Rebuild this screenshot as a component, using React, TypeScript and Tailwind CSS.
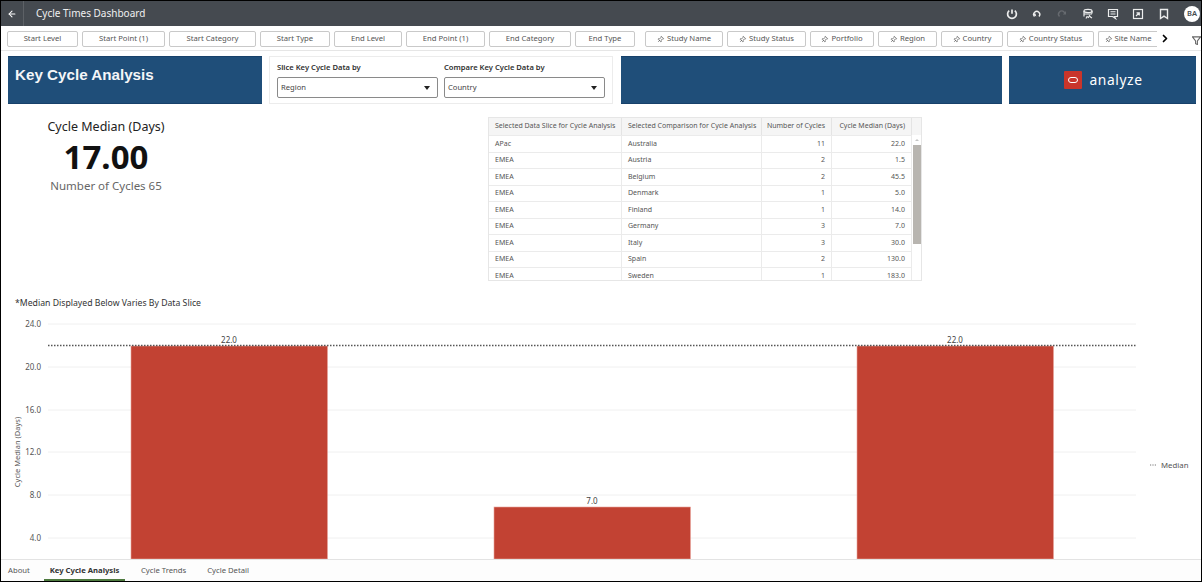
import React from "react";
import { ArrowLeft, ChevronRight, Pin } from "lucide-react";

const plain: [string, string][] = [
  ["Start Level", "w-[71px]"],
  ["Start Point (1)", "w-[83px]"],
  ["Start Category", "w-[87px]"],
  ["Start Type", "w-[70px]"],
  ["End Level", "w-[68px]"],
  ["End Point (1)", "w-[79px]"],
  ["End Category", "w-[82px]"],
  ["End Type", "w-[60px]"],
];
const pinned: [string, string][] = [
  ["Study Name", "w-[78px]"],
  ["Study Status", "w-[79px]"],
  ["Portfolio", "w-[64px]"],
  ["Region", "w-[59px]"],
  ["Country", "w-[62px]"],
  ["Country Status", "w-[87px]"],
];
const rows = [
  ["APac", "Australia", "11", "22.0"],
  ["EMEA", "Austria", "2", "1.5"],
  ["EMEA", "Belgium", "2", "45.5"],
  ["EMEA", "Denmark", "1", "5.0"],
  ["EMEA", "Finland", "1", "14.0"],
  ["EMEA", "Germany", "3", "7.0"],
  ["EMEA", "Italy", "3", "30.0"],
  ["EMEA", "Spain", "2", "130.0"],
  ["EMEA", "Sweden", "1", "183.0"],
];
const grid = [
  [324, "24.0"],
  [367, "20.0"],
  [410, "16.0"],
  [452, "12.0"],
  [495, "8.0"],
  [538, "4.0"],
] as const;
const bars = [
  [131, 346, "22.0"],
  [494, 507, "7.0"],
  [857, 346, "22.0"],
] as const;

function Ico({ className, children }: { className?: string; children: React.ReactNode }) {
  return (
    <svg viewBox="0 0 12 12" fill="none" stroke="currentColor" strokeWidth="1.4" className={`h-[12px] w-[12px] ${className ?? ""}`}>
      {children}
    </svg>
  );
}

function Select({ label, value }: { label: string; value: string }) {
  return (
    <div className="w-[161px]">
      <div className="h-[17px] text-[7.6px] leading-[15px] font-semibold text-[#2f2f2f]">{label}</div>
      <div className="flex h-[21px] items-center justify-between rounded-[2px] border border-[#8a8a8a] bg-white pl-[3px] pr-[7px] text-[7.6px] text-[#444]">
        <span>{value}</span>
        <span className="h-0 w-0 border-x-[3px] border-t-[4px] border-x-transparent border-t-[#222]" />
      </div>
    </div>
  );
}

export default function App() {
  return (
    <div className="flex h-[582px] w-[1202px] flex-col overflow-hidden border-x border-t border-b border-black bg-white font-['Noto_Sans','Open_Sans',sans-serif]">
      <header className="flex h-[25px] shrink-0 items-center bg-[#454a50] text-white">
        <div className="flex h-full w-[23px] items-center justify-center border-r border-[#5d6166]">
          <ArrowLeft size={10} strokeWidth={2.5} />
        </div>
        <div className="ml-[12px] text-[10px] text-[#f0f0f0]">Cycle Times Dashboard</div>
        <div className="ml-auto flex items-center pr-[1px] text-[#eceded]">
          <Ico className="mr-[13px]">
            <path d="M3.2 2.6a4.4 4.4 0 1 0 5.6 0" strokeWidth="1.7" />
            <path d="M6 1.5v4.200" strokeWidth="1.7" />
          </Ico>
          <Ico className="mr-[13px]">
            <path d="M3.500 8.500 a3 3 0 1 1 4.500 0" />
            <path d="M1.800 6h3v3z" fill="currentColor" stroke="none" transform="rotate(-15 3 7)" />
          </Ico>
          <Ico className="mr-[14px] text-[#666a6f]">
            <path d="M3.500 8.500a3 3 0 0 1 4.500-4.500l1.500 1.500" />
            <path d="M10 3v3.500H6.800z" fill="currentColor" stroke="none" />
          </Ico>
          <Ico className="mr-[13px]">
            <ellipse cx="6" cy="3" rx="4" ry="1.600" strokeWidth="1.200" />
            <path d="M2 3v5.500M10 3v2.500M2 6h8" strokeWidth="1.200" />
            <path d="M4 10.500l1-2 1.500 1 1-2 1 1.500 1.500 1" strokeWidth="1.100" />
          </Ico>
          <Ico className="mr-[13px]">
            <path d="M1.500 1.500h9v7H7.500l1 2-3-2h-4z" strokeWidth="1.200" />
            <path d="M3.500 3.800h5M3.500 6h5" strokeWidth="1.100" />
          </Ico>
          <Ico className="mr-[14px]">
            <rect x="1.500" y="1.500" width="9" height="9" strokeWidth="1.200" />
            <path d="M4 8l3-3M4.500 4.800H7.300V7.500" strokeWidth="1.200" />
          </Ico>
          <Ico className="mr-[14px]">
            <path d="M2.500 1.500h7v9L6 8.200 2.500 10.500z" />
          </Ico>
          <div className="flex h-[16px] w-[16px] items-center justify-center rounded-full bg-white text-[7.500px] font-semibold text-[#454a50]">BA</div>
        </div>
      </header>

      <div className="flex h-[25px] shrink-0 items-start border-b border-[#e6e6e6] pl-[6px] pt-[5px]">
        <div className="flex gap-[4px]">
          {plain.map(([t, w]) => (
            <div key={t} className={`flex h-[16px] items-center justify-center rounded-[2px] border border-[#c9c9c9] text-[7.7px] whitespace-nowrap text-[#555] ${w}`}>{t}</div>
          ))}
        </div>
        <div className="ml-[10px] flex gap-[4px]">
          {pinned.map(([t, w]) => (
            <div key={t} className={`flex h-[16px] items-center justify-center gap-[3px] rounded-[2px] border border-[#c9c9c9] text-[7.7px] whitespace-nowrap text-[#555] ${w}`}>
              <Pin size={7} className="rotate-45 text-[#444]" />
              {t}
            </div>
          ))}
          <div className="flex h-[16px] w-[59px] items-center justify-center gap-[3px] rounded-l-[2px] border-y border-l border-[#c9c9c9] text-[7.7px] whitespace-nowrap text-[#555]">
            <Pin size={7} className="rotate-45 text-[#444]" />
            Site Name
          </div>
        </div>
        <ChevronRight size={13} strokeWidth={3.4} className="ml-[2px] mt-[1px] text-black" />
        <svg viewBox="0 0 10 10" className="ml-[21px] mt-[5px] h-[9px] w-[9px] shrink-0 text-[#666]" fill="none" stroke="currentColor" strokeWidth="1.200">
          <path d="M0.500 1h9L6 5.500V9.500L4 8.500V5.500z" />
        </svg>
      </div>

      <div className="mt-[5px] flex h-[48px] shrink-0 pl-[7px]">
        <div className="w-[254px] border-y border-[#17416a] bg-[#1f4e79] pl-[7px] pt-[9px] font-['Liberation_Sans',sans-serif] text-[15.200px] leading-[18px] font-bold text-[#f4f6f8]">Key Cycle Analysis</div>
        <div className="ml-[7px] flex w-[344px] gap-[6px] border border-[#ececec] px-[7px] pt-[3px]">
          <Select label="Slice Key Cycle Data by" value="Region" />
          <Select label="Compare Key Cycle Data by" value="Country" />
        </div>
        <div className="ml-[8px] w-[381px] border-y border-[#17416a] bg-[#1f4e79]" />
        <div className="ml-[7px] flex w-[187px] items-center justify-center gap-[7px] border-y border-[#17416a] bg-[#1f4e79] pl-[2px]">
          <div className="flex h-[18px] w-[18px] items-center justify-center rounded-[1px] bg-[#c9352b]">
            <div className="h-[6px] w-[10px] rounded-full border-[1.5px] border-white" />
          </div>
          <span className="text-[13.800px] tracking-[0.6px] text-white">analyze</span>
        </div>
      </div>

      <div className="flex h-[178px] shrink-0">
        <div className="ml-[10px] w-[190px] pt-[15px] text-center">
          <div className="text-[12.500px] leading-[16px] text-[#222]">Cycle Median (Days)</div>
          <div className="text-[33px] leading-[43px] font-bold text-[#111]">17.00</div>
          <div className="text-[11.500px] leading-[15px] text-[#666]">Number of Cycles 65</div>
        </div>
        <div className="mt-[13px] ml-[287px] h-[164px] w-[434px] overflow-hidden border border-[#e6e6e6] text-[7px] text-[#555]">
          <div className="flex h-[17px] bg-[#f5f5f5]">
            <div className="flex w-[133px] items-center border-r border-[#e4e4e4] pl-[6px] whitespace-nowrap">Selected Data Slice for Cycle Analysis</div>
            <div className="flex w-[140px] items-center border-r border-[#e4e4e4] pl-[6px] whitespace-nowrap">Selected Comparison for Cycle Analysis</div>
            <div className="flex w-[70px] items-center justify-end border-r border-[#e4e4e4] pr-[6px] whitespace-nowrap">Number of Cycles</div>
            <div className="flex w-[80px] items-center justify-end border-r border-[#e4e4e4] pr-[6px] whitespace-nowrap">Cycle Median (Days)</div>
          </div>
          <div className="flex">
            <div className="w-[423px]">
              {rows.map((r) => (
                <div key={r[1]} className="flex h-[16.5px] border-t border-[#ebebeb]">
                  <div className="flex w-[133px] items-center border-r border-[#ebebeb] pl-[6px]">{r[0]}</div>
                  <div className="flex w-[140px] items-center border-r border-[#ebebeb] pl-[6px]">{r[1]}</div>
                  <div className="flex w-[70px] items-center justify-end border-r border-[#ebebeb] pr-[6px]">{r[2]}</div>
                  <div className="flex w-[80px] items-center justify-end border-r border-[#ebebeb] pr-[6px]">{r[3]}</div>
                </div>
              ))}
            </div>
            <div className="flex w-[9px] flex-col items-center">
              <span className="mt-[4px] h-0 w-0 border-x-[2px] border-b-[2px] border-x-transparent border-b-[#c4c4c4]" />
              <div className="mt-[4px] h-[99px] w-[8px] bg-[#b8b5b0]" />
              <span className="mt-[43px] h-0 w-0 border-x-[2px] border-t-[2px] border-x-transparent border-t-[#c4c4c4]" />
            </div>
          </div>
        </div>
      </div>

      <div className="h-[28px] shrink-0 pl-[14px] pt-[15px] text-[8.700px] leading-[12px] whitespace-nowrap text-[#333]">*Median Displayed Below Varies By Data Slice</div>

      <svg viewBox="1 310 1200 249" className="h-[249px] w-[1200px] shrink-0 font-['Noto_Sans','Open_Sans',sans-serif]">
        {grid.map(([y, t]) => (
          <g key={t}>
            <line x1="48" x2="1136" y1={y} y2={y} stroke="#f0f0f0" />
            <text x="41" y={y + 3} textAnchor="end" fontSize="8" fill="#555">{t}</text>
          </g>
        ))}
        <text transform="translate(20 452) rotate(-90)" textAnchor="middle" fontSize="7.500" fill="#555">Cycle Median (Days)</text>
        {bars.map(([x, y, t]) => (
          <g key={x}>
            <rect x={x} y={y} width="196.500" height={559 - y} fill="#c24233" stroke="#e8a49c" strokeWidth="0.6" />
            <text x={x + 98} y={y - 3} textAnchor="middle" fontSize="8" fill="#444">{t}</text>
          </g>
        ))}
        <line x1="48" x2="1136" y1="345.500" y2="345.500" stroke="#555" strokeWidth="1.500" strokeDasharray="1.500 1.500" />
        <line x1="1150" x2="1156" y1="465" y2="465" stroke="#777" strokeDasharray="1.200 1.200" />
        <text x="1161" y="468" fontSize="7.800" fill="#555">Median</text>
      </svg>

      <nav className="flex flex-1 items-stretch border-t border-[#e3e3e3] bg-[#fdfdfd] text-[7.700px] text-[#555]">
        <div className="flex w-[43px] items-center pl-[7px]">About</div>
        <div className="flex w-[81px] items-center justify-center border-b-[2px] border-[#4e7a3f] pt-[2px] font-bold text-[#333]">Key Cycle Analysis</div>
        <div className="ml-[16px] flex items-center">Cycle Trends</div>
        <div className="ml-[21px] flex items-center">Cycle Detail</div>
      </nav>
    </div>
  );
}
